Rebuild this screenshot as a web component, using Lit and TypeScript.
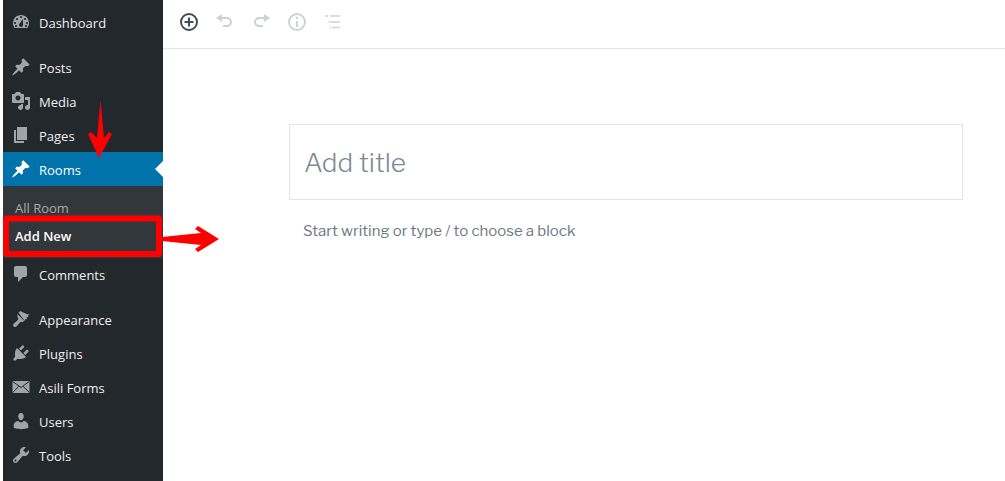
import { LitElement, html, css, svg } from "lit";
import { customElement } from "lit/decorators.js";

const icons: Record<string, unknown> = {
  dashboard: svg`<path fill-rule="evenodd" d="M3.76 16h12.48c1.100-1.370 1.760-3.110 1.760-5 0-4.420-3.580-8-8-8s-8 3.580-8 8c0 1.890.660 3.630 1.760 5zM10 4c.550 0 1 .450 1 1s-.450 1-1 1-1-.450-1-1 .450-1 1-1zM6 6c.550 0 1 .450 1 1s-.450 1-1 1-1-.450-1-1 .450-1 1-1zm8 0c.550 0 1 .450 1 1s-.450 1-1 1-1-.450-1-1 .450-1 1-1zm-5.370 5.550L12 7v6c0 1.100-.900 2-2 2s-2-.900-2-2c0-.570.240-1.080.630-1.450zM4 10c.550 0 1 .450 1 1s-.450 1-1 1-1-.450-1-1 .450-1 1-1zm12 0c.550 0 1 .450 1 1s-.450 1-1 1-1-.450-1-1 .450-1 1-1zM5 13c.550 0 1 .450 1 1s-.450 1-1 1-1-.450-1-1 .450-1 1-1zm10 0c.550 0 1 .450 1 1s-.450 1-1 1-1-.450-1-1 .450-1 1-1z"/>`,
  pin: svg`<path d="M10.440 3.020l1.820-1.820 6.360 6.350-1.830 1.820c-1.050-.680-2.480-.570-3.410.360l-.750.750c-.920.930-1.040 2.350-.350 3.410l-1.830 1.820-2.410-2.410-2.800 2.790c-.420.420-3.380 2.710-3.800 2.290s1.860-3.390 2.280-3.810l2.790-2.790L4.100 9.360l1.830-1.820c1.050.690 2.480.570 3.400-.360l.750-.750c.930-.920 1.050-2.350.360-3.410z"/>`,
  media: svg`<path fill-rule="evenodd" d="M13 11V4c0-.550-.450-1-1-1h-1.670L9 1H5L3.670 3H2c-.550 0-1 .450-1 1v7c0 .550.450 1 1 1h10c.550 0 1-.450 1-1zM7 4.500c1.380 0 2.500 1.120 2.500 2.500S8.380 9.500 7 9.500 4.500 8.380 4.500 7 5.620 4.500 7 4.500zM14 6h5v10.500c0 1.380-1.120 2.500-2.500 2.500S14 17.880 14 16.500s1.120-2.500 2.500-2.500c.170 0 .340.020.500.050V9h-3V6zm-4 8.050V13h2v3.500c0 1.380-1.120 2.500-2.500 2.500S7 17.880 7 16.500 8.120 14 9.500 14c.170 0 .340.020.500.050z"/>`,
  pages: svg`<path d="M6 15V2h10v13H6zm-1 1h8v2H3V5h2v11z"/>`,
  comment: svg`<path d="M5 2h9c1.100 0 2 .900 2 2v7c0 1.100-.900 2-2 2h-2l-5 5v-5H5c-1.100 0-2-.900-2-2V4c0-1.100.900-2 2-2z"/>`,
  brush: svg`<path d="M7.500 3.700 9.200 2c3 1.200 5 3.200 9.300 3.600l-1.700 1.400 1 1-2.400.4.700 1.600-2 .2-.3 1.800zM6.300 4.900l6.800 6.800-1.700 1.700c-.800-.700-1.600-.700-2.300-.2l-3.700 4.300c-.800.700-1.900.600-2.700-.1-.700-.800-.800-1.900 0-2.700l4.200-3.700c.600-.800.500-1.600-.200-2.300z"/>`,
  plug: svg`<path d="M13.110 4.360L9.870 7.600 8 5.730l3.240-3.240c.350-.340 1.050-.200 1.560.320.520.510.660 1.210.310 1.550zm-8 1.770l.910-1.120 9.010 9.010-1.190.840c-.710.710-2.630 1.160-3.820 1.160H6.140L4.900 17.260c-.590.590-1.540.590-2.120 0-.590-.580-.590-1.530 0-2.120l1.240-1.240v-3.880c0-1.130.460-3.050 1.090-3.890zm7.260 3.970l3.240-3.240c.340-.350 1.040-.210 1.550.310.520.510.660 1.210.310 1.560l-3.240 3.240z"/>`,
  mail: svg`<path d="M1.500 4h17v12h-17z"/><path d="M1.500 4.300 10 10.500l8.500-6.200M1.500 15.700l6.600-6.600M18.500 15.700l-6.600-6.600" fill="none" stroke="#23282d" stroke-width="1"/>`,
  user: svg`<path d="M10 9.250c-2.270 0-2.730-3.440-2.730-3.440C7 4.020 7.820 2 9.970 2c2.160 0 2.980 2.020 2.710 3.810 0 0-.410 3.440-2.680 3.440zm0 2.570L12.720 10c2.390 0 4.520 2.330 4.520 4.530v2.490s-3.650 1.130-7.240 1.130c-3.650 0-7.240-1.130-7.240-1.130v-2.490c0-2.250 1.940-4.480 4.470-4.480z"/>`,
  wrench: svg`<path fill-rule="evenodd" d="M16.680 9.770c-1.340 1.340-3.300 1.670-4.950.990l-5.410 6.520c-.990.990-2.590.990-3.570 0-.990-.980-.990-2.580 0-3.570l6.520-5.420c-.680-1.650-.350-3.610.990-4.950 1.280-1.280 3.120-1.620 4.720-1.060l-2.890 2.890 2.820 2.820 2.890-2.870c.530 1.580.180 3.390-1.120 4.650zM3.810 16.210c.400.390 1.030.390 1.420 0 .400-.390.400-1.030 0-1.420-.390-.400-1.020-.400-1.420 0-.390.390-.390 1.030 0 1.420z"/>`,
};

const item = (label: string, icon: string, extra = "") => html`
  <a class="item ${extra}"><svg class="ico" viewBox="0 0 20 20">${icons[icon]}</svg><span>${label}</span></a>`;

@customElement("app-root")
export class AppRoot extends LitElement {
  static styles = css`
    :host { display: block; width: 1005px; height: 481px; position: relative; overflow: hidden; background: #fff; }
    .page { display: flex; height: 481px; padding-left: 3px; box-sizing: border-box; }
    .side { width: 160px; flex: none; background: #23282d; padding-top: 6px; box-sizing: border-box;
      font: 13px/18px "Open Sans", sans-serif; color: #eee; }
    .item { display: flex; align-items: center; height: 34px; padding-left: 8px; box-sizing: border-box; }
    .ico { width: 20px; height: 20px; fill: #a0a5aa; margin: -2px 8px 0 0; flex: none; }
    .gap { margin-bottom: 11px; }
    .pagesrow { margin-bottom: -1px; }
    .current { background: #0073aa; color: #fff; position: relative; padding-top: 2px; }
    .current .ico { fill: #fff; }
    .current::after { content: ""; position: absolute; right: 0; top: 50%; margin-top: -8px;
      border: 8px solid transparent; border-right-color: #fff; border-left: 0; }
    .sub { background: #32373c; height: 72px; padding-top: 13px; box-sizing: border-box; }
    .sub div { padding-left: 12px; height: 28px; line-height: 18px; color: #a4a9ae; }
    .sub .on { color: #fff; font-weight: 600; }
    .main { flex: 1; min-width: 0; display: flex; flex-direction: column; }
    .bar { height: 49px; flex: none; border-bottom: 1px solid #e2e4e7; box-sizing: border-box;
      display: flex; align-items: center; padding: 0 0 5px 16px; gap: 16px; }
    .bar svg { width: 20px; height: 20px; flex: none; }
    .ring { fill: none; stroke: #ced2d6; stroke-width: 2; }
    .solid { fill: #ced2d6; }
    .bar svg.first { fill: none; stroke: #444c55; stroke-width: 2; }
    .editor { padding: 75px 0 0 126px; }
    .title { width: 674px; height: 76px; box-sizing: border-box; border: 1px solid #e2e4e7; padding: 2px 0 0 15px;
      display: flex; align-items: center; font: 300 26.300px/1 "Libre Franklin", "Lato", sans-serif; color: #7e8993; }
    .title span { margin-left: -1px; }
    .hint { margin: 22px 0 0 14px; font: 15px/18px "Libre Franklin", "Lato", sans-serif; color: #6c7781; }
    .overlay { position: absolute; left: 0; top: 0; width: 1005px; height: 481px; pointer-events: none; }
  `;

  render() {
    return html`
      <div class="page">
        <nav class="side">
          ${item("Dashboard", "dashboard", "gap")}
          ${item("Posts", "pin")}
          ${item("Media", "media")}
          ${item("Pages", "pages", "pagesrow")}
          ${item("Rooms", "pin", "current")}
          <div class="sub"><div>All Room</div><div class="on">Add New</div></div>
          ${item("Comments", "comment", "gap")}
          ${item("Appearance", "brush")}
          ${item("Plugins", "plug")}
          ${item("Asili Forms", "mail")}
          ${item("Users", "user")}
          ${item("Tools", "wrench")}
        </nav>
        <main class="main">
          <div class="bar">
            <svg class="first" viewBox="0 0 20 20"><circle cx="10" cy="10" r="8"/><path d="M10 5.500v9M5.500 10h9"/></svg>
            <svg class="solid" viewBox="0 0 20 20"><path d="M12 5H7V2L1 6l6 4V7h5c1.660 0 3 1.340 3 3s-1.340 3-3 3H8v2h4c2.760 0 5-2.240 5-5s-2.240-5-5-5z"/></svg>
            <svg class="solid" viewBox="0 0 20 20"><path d="M8 5h5V2l6 4-6 4V7H8c-1.660 0-3 1.340-3 3s1.340 3 3 3h4v2H8c-2.760 0-5-2.240-5-5s2.240-5 5-5z"/></svg>
            <svg class="ring" viewBox="0 0 20 20"><circle cx="10" cy="10" r="8"/><path d="M10 9v6M10 5v2"/></svg>
            <svg class="ring" viewBox="0 0 20 20"><path stroke-width="1.500" d="M2 4h3M7 4h10M5 10h1M7 10h10M7 15.500h1M9 15.500h8"/></svg>
          </div>
          <div class="editor">
            <div class="title"><span>Add title</span></div>
            <div class="hint">Start writing or type / to choose a block</div>
          </div>
        </main>
      </div>
      <svg class="overlay" viewBox="0 0 1005 481">
        <rect x="6" y="218.500" width="153" height="35.500" rx="1" fill="none" stroke="#f00" stroke-width="6"/>
        <path d="M100.500 100 L104 138 L109 132 L112 134 L99 158 L88 134 L91 132 L97 138 Z" fill="#f00"/>
        <path d="M162 237 L201 233 L195 229 L198 226 L219 239 L198 252 L195 249 L201 245 L162 241Z" fill="#f00"/>
      </svg>
    `;
  }
}
